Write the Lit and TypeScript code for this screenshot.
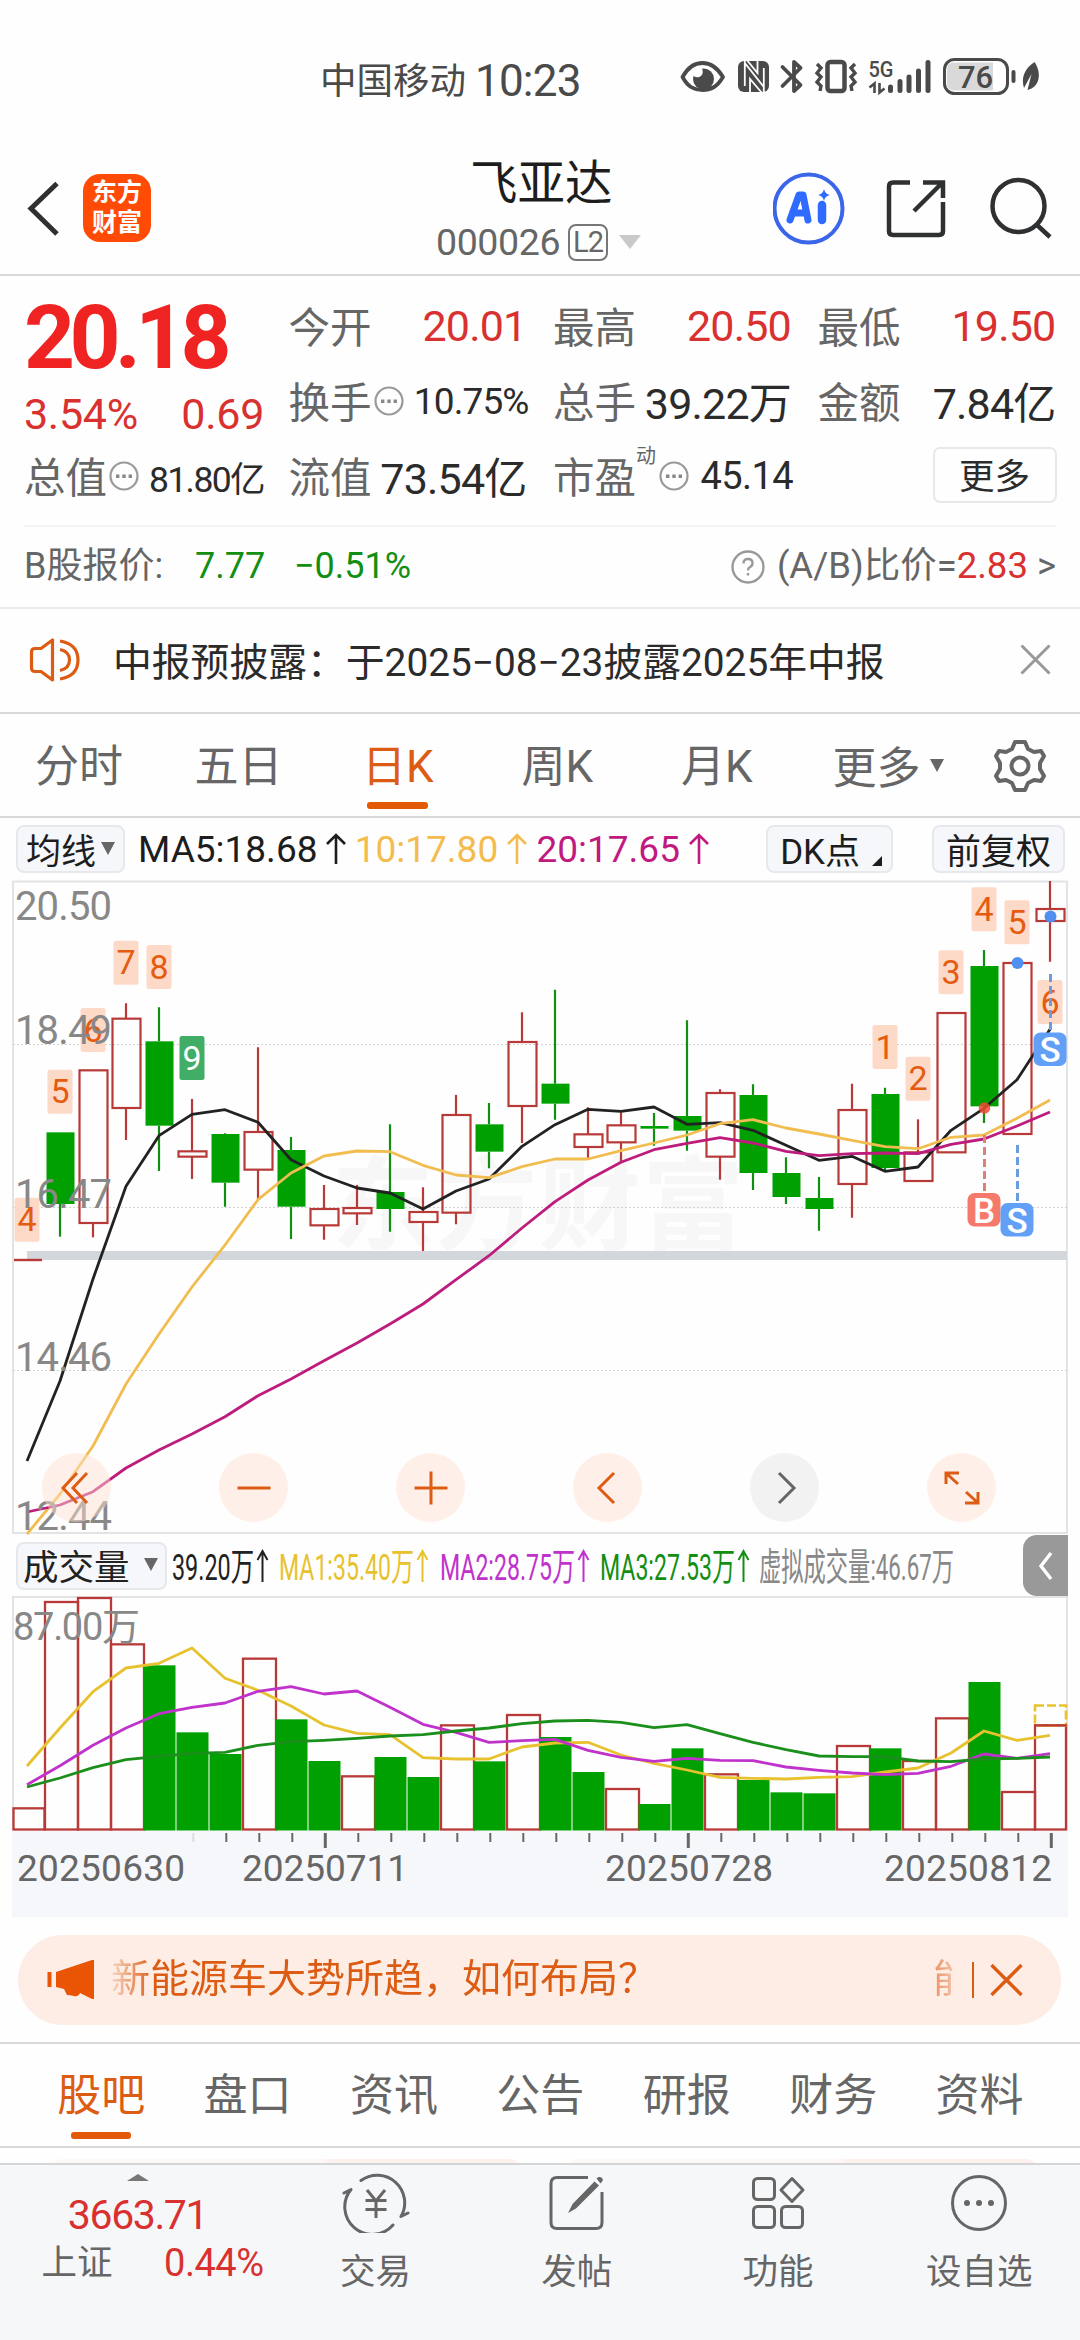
import { LitElement, html, svg, css } from "lit";
import { customElement, property } from "lit/decorators.js";
import { classMap } from "lit/directives/class-map.js";

const RED = "#b83a38";
const GREEN = "#00a000";
const PITCH = 33;
const cx = (i: number) => 27 + PITCH * i;

/* Vertical values are stored in thirds of a pixel. */
const ky = (v: number) => 870 + v / 3;
const vy = (v: number) => 1580 + v / 3;

/* [up, high, bodyTop, bodyBottom, low] */
const CANDLES: [number, number, number, number, number][] = [
  [1, 1171, 1171, 1174, 1174], [0, 790, 790, 1005, 1103], [1, 604, 604, 1062, 1105], [1, 403, 449, 717, 813],
  [0, 415, 517, 770, 906], [1, 690, 847, 863, 930], [0, 793, 795, 941, 1013], [1, 535, 789, 902, 992],
  [0, 804, 843, 1013, 1110], [1, 948, 1020, 1069, 1112], [1, 948, 1017, 1033, 1068], [0, 766, 969, 1020, 1088],
  [1, 955, 1029, 1059, 1146], [1, 678, 738, 1031, 1066], [0, 702, 766, 848, 898], [1, 430, 519, 711, 822],
  [0, 362, 644, 704, 752], [1, 715, 796, 834, 868], [1, 730, 769, 820, 880], [0, 732, 771, 779, 830],
  [0, 454, 741, 785, 845], [1, 661, 672, 863, 932], [0, 646, 678, 912, 963], [0, 865, 912, 984, 1005],
  [0, 924, 987, 1020, 1085], [1, 644, 723, 945, 1046], [0, 656, 675, 897, 903], [1, 751, 850, 936, 936],
  [1, 432, 432, 850, 850], [0, 243, 291, 712, 762], [1, 282, 282, 795, 795], [1, 36, 120, 156, 278],
];
const MA5 = [1776, 1536, 1230, 952, 800, 736, 722, 760, 872, 921, 957, 972, 1020, 966, 930, 832, 767, 721, 727, 714, 766, 761, 784, 829, 874, 862, 907, 894, 784, 718, 632, 481];
const MA10 = [1995, 1875, 1731, 1545, 1395, 1254, 1128, 992, 912, 861, 846, 848, 889, 918, 926, 893, 870, 870, 845, 822, 798, 764, 752, 777, 795, 814, 833, 839, 805, 798, 748, 693];
const MA20 = [1929, 1908, 1868, 1797, 1743, 1695, 1643, 1580, 1530, 1475, 1422, 1365, 1305, 1232, 1160, 1077, 998, 933, 880, 842, 823, 806, 822, 847, 860, 854, 852, 854, 826, 810, 771, 729];

/* [candle index, top, digit] */
const COUNTS: [number, number, string][] = [
  [0, 986, "4"], [1, 602, "5"], [2, 417, "6"], [3, 215, "7"], [4, 228, "8"], [5, 501, "9"],
  [26, 468, "1"], [27, 563, "2"], [28, 244, "3"], [29, 55, "4"], [30, 94, "5"], [31, 333, "6"],
];

/* [up, top] */
const VOLUMES: [number, number][] = [
  [1, 688], [1, 69], [1, 57], [1, 196], [0, 259], [0, 460], [0, 525], [1, 239], [0, 421], [0, 546], [1, 592],
  [0, 534], [0, 594], [1, 439], [0, 547], [1, 408], [0, 474], [0, 579], [1, 630], [0, 675], [0, 508], [1, 586],
  [0, 603], [0, 640], [0, 643], [1, 501], [0, 508], [1, 546], [1, 418], [0, 309], [1, 639], [1, 439],
];
const V1 = [561, 447, 338, 267, 253, 207, 298, 334, 381, 438, 463, 467, 536, 540, 540, 504, 492, 490, 528, 553, 573, 595, 598, 600, 595, 593, 579, 567, 522, 456, 484, 469];
const V2 = [617, 560, 499, 447, 404, 385, 372, 337, 323, 345, 336, 385, 436, 460, 490, 485, 481, 514, 535, 547, 538, 544, 545, 564, 574, 582, 587, 583, 562, 525, 538, 524];
const V3 = [624, 597, 566, 542, 532, 523, 520, 499, 488, 484, 478, 471, 467, 456, 447, 434, 426, 424, 430, 446, 437, 464, 490, 512, 531, 533, 533, 546, 548, 540, 538, 534];

const points = (values: number[], y: (v: number) => number) =>
  values.map((v, i) => `${cx(i)},${y(v).toFixed(1)}`).join(" ");

const FONT = css`Roboto, "Noto Sans CJK SC", sans-serif`;

const base = css`
  :host { display: block; font-family: ${FONT}; }
  * { box-sizing: border-box; }
  svg { display: block; flex: none; }
  svg text { font-family: ${FONT}; }
`;

@customElement("status-bar")
class StatusBar extends LitElement {
  static styles = [base, css`
    .bar { display: flex; height: 110px; padding: 52px 0 0 320px; color: #4a4a4a; }
    .carrier { width: 155px; font-size: 36.500px; line-height: 60px; white-space: nowrap; }
    .time { width: 205px; font-size: 44px; line-height: 59px; letter-spacing: -0.8px; }
  `];
  render() {
    return html`<div class="bar">
      <span class="carrier">中国移动</span><span class="time">10:23</span>
      <svg width="364" height="50" viewBox="680 56 364 50" fill="none" stroke="#4a4a4a">
        <path d="M682.500 81C688 71 694 67 702.500 67S717 71 723 81C717 91 711 94 702.500 94S688 91 682.500 81Z" stroke-width="3.800" stroke-linejoin="round"/>
        <circle cx="703.500" cy="83" r="10.500" fill="#4a4a4a" stroke="none"/>
        <path d="M690 76L701 71c3 4 2 9-2 10-3 1-7-1-9-5z" fill="#fff" stroke="none"/>
        <rect x="738" y="65" width="31" height="31" rx="6" fill="#4a4a4a" stroke="none"/>
        <path d="M744.800 65V90M763.800 72V96M744.800 67L763.800 91M750 97V83L762 97M757.500 65V77L746 63" stroke="#fff" stroke-width="1.800"/>
        <path d="M782.500 71L800.500 89 794 95V66L800.500 72 782.500 90" stroke-width="3.800" stroke-linejoin="round" stroke-linecap="round"/>
        <rect x="827.500" y="66" width="17" height="29" rx="3" stroke-width="4.500"/>
        <path d="M817 68l4 4-4 5 4 4-4 5 4 4-1 5M855 68l-4 4 4 5-4 4 4 5-4 4 1 5" stroke-width="3.400"/>
        <text x="868.500" y="80.500" font-size="22.500" font-weight="500" textLength="25" lengthAdjust="spacingAndGlyphs" fill="#4a4a4a" stroke="none">5G</text>
        <path d="M874.500 97V87.500l-5 4M879.500 87v9.500l5-4" stroke-width="2.600"/>
        <path d="M890.500 94.500V91M900 94.500V85.500M909 94.500V81M918.500 94.500V75M928 94.500V66.500" stroke-width="5" stroke-linecap="round"/>
        <rect x="944.500" y="63.500" width="63" height="34" rx="10" fill="#fff" stroke-width="3"/>
        <path d="M954 66.500h39v28h-39q-7 0-7-7v-14q0-7 7-7Z" fill="#d9d9d9" stroke="none"/>
        <text x="975.500" y="91.500" font-size="31" font-weight="500" text-anchor="middle" fill="#4a4a4a" stroke="none">76</text>
        <path d="M1013.500 76v9" stroke-width="4" stroke-linecap="round"/>
        <path d="M1034.500 66C1024 73 1021 82 1024 92L1031.500 78 1027.500 94C1040 91 1042 77 1034.500 66Z" fill="#4a4a4a" stroke="none"/>
      </svg>
    </div>`;
  }
}

@customElement("stock-header")
class StockHeader extends LitElement {
  static styles = [base, css`
    .header { display: grid; grid-template-columns: 83px 68px 1fr 307px; height: 166px; border-bottom: 2px solid #d9d9d9; }
    .back { margin: 70px 0 0 26px; }
    .logo { display: flex; flex-direction: column; align-items: center; width: 68px; height: 68px; margin-top: 64px; padding-top: 4px;
      border-radius: 17px; background: #ff4b05; color: #fff; font-weight: 700; font-size: 25px; line-height: 30px; }
    .title { display: flex; flex-direction: column; padding-left: 285px; white-space: nowrap; }
    .name { margin: 46px 0 0 34px; font-size: 47.500px; line-height: 56px; color: #1d1d1d; font-weight: 400; }
    .code { display: flex; align-items: center; height: 44px; margin-top: 8px; font-size: 37.500px; color: #666; letter-spacing: -0.4px; }
    .level { width: 40px; height: 37px; margin: 0 11px 0 8px; border: 2px solid #777; border-radius: 8px; font-size: 29px; line-height: 33px; text-align: center; letter-spacing: -1px; }
    .tri { width: 0; border: 11px solid transparent; border-top: 14px solid #c9c9c9; border-bottom: 0; }
  `];
  render() {
    return html`<div class="header">
      <svg class="back" width="34" height="58" viewBox="26 180 34 58"><path d="M57 183.500L31 208.500 57 234" fill="none" stroke="#2e3032" stroke-width="5"/></svg>
      <div class="logo"><span>东方</span><span>财富</span></div>
      <div class="title">
        <div class="name">飞亚达</div>
        <div class="code"><span>000026</span><span class="level">L2</span><i class="tri"></i></div>
      </div>
      <svg width="307" height="164" viewBox="773 110 307 164" fill="none" stroke="#2e3032" stroke-width="4.500">
        <circle cx="808.500" cy="208.500" r="34" stroke="#3b66ea" stroke-width="4" fill="#fff"/>
        <path d="M790 220L799 195H803L808 220M794 213H806" stroke="#2f6bff" stroke-width="7" stroke-linejoin="round" stroke-linecap="round"/>
        <path d="M822 205V220" stroke="#2f6bff" stroke-width="8.500" stroke-linecap="round"/>
        <path d="M824 189q1 5 6 6-5 1-6 6-1-5-6-6 5-1 6-6Z" fill="#2f6bff" stroke="none"/>
        <path d="M910 182.500H893q-4 0-4 4V231q0 4 4 4h46q4 0 4-4V202M914 211L942 183M923 182.500h20V198"/>
        <circle cx="1018.500" cy="206" r="26"/><path d="M1037 225L1050 237"/>
      </svg>
    </div>`;
  }
}

const dots = html`<svg width="30" height="30" viewBox="0 0 30 30"><circle cx="15" cy="15" r="13.500" fill="none" stroke="#999" stroke-width="2.200"/><path d="M7 13.500h3.400v3.400H7zM13.300 13.500h3.400v3.400h-3.400zM19.600 13.500h3.400v3.400h-3.400z" fill="#888"/></svg>`;

@customElement("quote-panel")
class QuotePanel extends LitElement {
  static styles = [base, css`
    .grid { display: grid; grid-template-columns: 238px 238px 238px 238px; grid-template-rows: 75px 75px 75px; column-gap: 26.5px;
      height: 251px; margin: 0 24px; padding-top: 13px; border-bottom: 2px solid #f3f3f3; white-space: nowrap; }
    .main { grid-row: span 2; display: flex; flex-direction: column; color: #d93030; }
    .price { height: 88px; margin-top: 5px; font-size: 89px; line-height: 88px; font-weight: 700; letter-spacing: -5.600px; color: #f02323; }
    .change { display: flex; justify-content: space-between; height: 56px; margin: 4px -2px 0 0; line-height: 56px; font-size: 43px; letter-spacing: -0.3px; }
    .cell { display: flex; align-items: center; justify-content: space-between; height: 71px; font-size: 43px; letter-spacing: -0.8px; color: #2b2b2b; }
    .label { display: flex; align-items: center; font-size: 41.500px; letter-spacing: 0; color: #666; }
    .label svg { margin: 3px 0 0 2px; }
    .small { padding-top: 3px; margin-right: -2px; font-size: 37px; letter-spacing: -0.9px; }
    .tight { font-size: 35.500px; letter-spacing: -1.600px; }
    .wide { font-size: 38px; letter-spacing: -0.6px; }
    .up { padding-top: 2px; color: #d93030; }
    .label sup { width: 21px; margin-bottom: 38px; font-size: 20px; line-height: 20px; }
    .more { display: flex; align-items: center; justify-content: center; justify-self: end; width: 124px; height: 56px; margin: 8px -1px 0 0; padding-bottom: 4px;
      border: 2px solid #e6e8ea; border-radius: 7px; font-size: 35.500px; color: #2b2b2b; }
    .b { display: flex; align-items: center; height: 82px; padding: 0 24px; border-bottom: 2px solid #ebebeb; font-size: 36px; line-height: 50px; color: #666; white-space: nowrap; padding-bottom: 2px; }
    .blabel { width: 171px; } .bprice { width: 99px; } .down { color: #128f12; letter-spacing: 0; }
    .ratio { display: flex; align-items: center; margin-left: auto; letter-spacing: 0; font-size: 36.500px; }
    .ratio .up { padding: 0; }
    .ratio svg { margin: 2px 12px 0 0; }
    .gt { margin-left: 9px; }
  `];
  render() {
    return html`<div class="grid">
      <div class="main"><div class="price">20.18</div><div class="change"><span>3.54%</span><span>0.69</span></div></div>
      <div class="cell"><span class="label">今开</span><span class="up">20.01</span></div>
      <div class="cell"><span class="label">最高</span><span class="up">20.50</span></div>
      <div class="cell"><span class="label">最低</span><span class="up">19.50</span></div>
      <div class="cell"><span class="label">换手${dots}</span><span class="small">10.75%</span></div>
      <div class="cell"><span class="label">总手</span><span>39.22万</span></div>
      <div class="cell"><span class="label">金额</span><span>7.84亿</span></div>
      <div class="cell"><span class="label">总值${dots}</span><span class="small tight">81.80亿</span></div>
      <div class="cell"><span class="label">流值</span><span>73.54亿</span></div>
      <div class="cell"><span class="label">市盈<sup>动</sup>${dots}</span><span class="small wide">45.14</span></div>
      <div class="more">更多</div>
    </div>
    <div class="b"><span class="blabel">B股报价:</span><span class="down bprice">7.77</span><span class="down">−0.51%</span>
      <span class="ratio"><svg width="34" height="34" viewBox="0 0 34 34" fill="none" stroke="#999" stroke-width="2.400"><circle cx="17" cy="17" r="15.500"/><path d="M12.500 13.500Q12.500 9 17 9t4.500 4.200q0 2.600-2.500 3.800-2 1-2 3.500M17 23v2.600"/></svg>(A/B)比价=<span class="up">2.83</span><span class="gt">&gt;</span></span>
    </div>`;
  }
}

@customElement("notice-row")
class NoticeRow extends LitElement {
  static styles = [base, css`
    .row { display: flex; align-items: center; height: 105px; padding: 0 29px 2px 29px; border-bottom: 2px solid #d9d9d9; }
    .text { flex: 1; margin: -2px 0 0 32px; font-size: 38.800px; white-space: nowrap; color: #2b2b2b; }
  `];
  render() {
    return html`<div class="row">
      <svg width="52" height="46" viewBox="29 639 52 46" fill="none" stroke="#dc5c14" stroke-width="3.200" stroke-linejoin="round">
        <path d="M52.500 642V682L41 673.500H35q-3.500 0-3.500-3.500V654q0-3.500 3.500-3.500h6ZM60 643q18 3 18 19T60 681M60 651.500q9.500 2 9.500 10.500T60 672.500"/></svg>
      <span class="text">中报预披露：于2025−08−23披露2025年中报</span>
      <svg width="31" height="31" viewBox="0 0 31 31"><path d="M1.500 1.500l28 28M29.500 1.500l-28 28" stroke="#999" stroke-width="3"/></svg>
    </div>`;
  }
}

@customElement("period-tabs")
class PeriodTabs extends LitElement {
  static styles = [base, css`
    .tabs { display: flex; height: 104px; padding-left: 35px; border-bottom: 2px solid #d9d9d9; font-size: 44px; color: #666; white-space: nowrap; }
    .tab { display: flex; flex-direction: column; width: 159.500px; line-height: 106px; }
    .tab.on { color: #dc5c14; }
    .tab i { width: 61px; height: 7px; margin: -18px 0 0 13px; border-radius: 3px; background: #e25a08; }
    .k { padding-left: 8px; } .k i { margin-left: 5px; }
    .more { display: flex; align-items: center; width: 160px; }
    .tri { border: 7.500px solid transparent; border-top: 13px solid #666; border-bottom: 0; margin-left: 9px; }
    .gear { margin-top: 25px; }
  `];
  render() {
    const tabs = ["分时", "五日", "日K", "周K", "月K"];
    return html`<div class="tabs">
      ${tabs.map((t) => html`<div class=${classMap({ tab: true, on: t === "日K", k: t.endsWith("K") })}><span>${t}</span>${t === "日K" ? html`<i></i>` : ""}</div>`)}
      <div class="more">更多<i class="tri"></i></div>
      <svg class="gear" width="54" height="54" viewBox="-27 -27 54 54" fill="none" stroke="#666" stroke-width="4" stroke-linejoin="round">
        <path d="M-5-24H5L8-17 14-14 21-15 24-10 20-3V3L24 10 21 15 14 14 8 17 5 24H-5L-8 17-14 14-21 15-24 10-20 3V-3L-24-10-21-15-14-14-8-17Z"/><circle r="8.500"/></svg>
    </div>`;
  }
}

@customElement("ma-legend")
class MaLegend extends LitElement {
  static styles = [base, css`
    .row { display: flex; align-items: center; height: 58px; padding: 4px 15px 0 16px; font-size: 37px; white-space: nowrap; color: #1d1d1d; }
    .btn { display: flex; align-items: center; height: 48px; padding: 0 8px 2px; border: 2px solid #e6e8ec; border-radius: 8px; background: #f6f7fa; font-size: 35px; }
    .tri { margin-left: 5px; border: 7px solid transparent; border-top: 13px solid #666; border-bottom: 0; }
    .item { display: flex; align-items: center; gap: 9px; }
    .ma5 { width: 217px; margin-left: 13px; }
    .ma10 { width: 182px; color: #f4bc4e; }
    .ma20 { width: 230px; color: #c01a80; }
    .dk { width: 127px; margin-right: 39px; padding-left: 12px; }
    .reset { padding: 0 12px 2px; }
    .corner { align-self: flex-end; margin: 0 0 3px 12px; border: 5.500px solid #1d1d1d; border-top-color: transparent; border-left-color: transparent; }
  `];
  arrow() {
    return html`<svg width="20" height="32" viewBox="0 0 20 32"><path d="M10 31V2M1 11L10 2l9 9" fill="none" stroke="currentColor" stroke-width="2.600"/></svg>`;
  }
  render() {
    return html`<div class="row">
      <div class="btn"><span>均线</span><i class="tri"></i></div>
      <span class="item ma5">MA5:18.68${this.arrow()}</span>
      <span class="item ma10">10:17.80${this.arrow()}</span>
      <span class="item ma20">20:17.65${this.arrow()}</span>
      <div class="btn dk"><span>DK点</span><i class="corner"></i></div>
      <div class="btn reset">前复权</div>
    </div>`;
  }
}

@customElement("candle-chart")
class CandleChart extends LitElement {
  static styles = [base, css`
    .chart { position: relative; height: 659px; }
    .grid { stroke: #d2d2d2; stroke-width: 1.200; stroke-dasharray: 2 2; }
    .axis { font-size: 40px; fill: #888; }
    .controls { position: absolute; left: 42px; right: 84px; bottom: 13px; display: flex; justify-content: space-between; }
    .ctl { display: grid; place-items: center; width: 69px; height: 69px; border-radius: 50%; background: rgba(255, 226, 210, 0.48); color: #dc5c14; }
    .ctl.off { background: #f2f2f2; color: #666; }
  `];
  candle(c: [number, number, number, number, number], i: number) {
    const [up, hi, top, bot, lo] = c;
    const x = cx(i);
    const color = up ? RED : "#128f12";
    if (i === 0) return svg`<path d="M14 1261h28" stroke=${RED} stroke-width="2.400"/>`;
    return svg`<path d=${`M${x} ${ky(hi)}V${ky(top)}M${x} ${ky(bot)}V${ky(lo)}`} stroke=${color} stroke-width="2.200"/>
      ${up
        ? svg`<rect x=${x - 13.5} y=${ky(top)} width="28" height=${(bot - top) / 3} fill="none" stroke=${RED} stroke-width="2.200"/>`
        : svg`<rect x=${x - 13.5} y=${ky(top)} width="28" height=${(bot - top) / 3} fill=${GREEN}/>`}`;
  }
  signal(x: number, y: number, letter: string, color: string) {
    return svg`<rect x=${x - 16.5} y=${y} width="33" height="33.500" rx="7" fill=${color}/>
      <text x=${x} y=${y + 29.5} font-size="35" font-weight="500" text-anchor="middle" fill="#fff">${letter}</text>`;
  }
  render() {
    const paths = [
      "M0-15L-14 0 0 15M10-15L-4 0 10 15", "M-16.500 0h33", "M-16.500 0h33M0-16.500v33", "M6-15L-9 0 6 15", "M-6-15L9 0-6 15",
      "M-16-4V-15H-3M-15-14L-4-4M16 4V15H3M15 14L4 4",
    ];
    return html`<div class="chart">
      <svg width="1080" height="659" viewBox="0 877 1080 659">
        <text x="332" y="1243" font-size="102" font-weight="700" textLength="412" fill="#f7f7f7">东方财富</text>
        <path d="M13 882.500H1067V1534H13Z" fill="none" stroke="#e2e3e5" stroke-width="2"/>
        <path class="grid" d="M13 1045.500H1067M13 1208.500H1067M13 1371.500H1067"/>
        <rect x="27" y="1252" width="1040" height="9" fill="#d3d6db"/>
        ${COUNTS.map(([i, top, d]) => svg`<rect x=${cx(i) - 12.5} y=${ky(top)} width="25" height="44" rx="2.500" fill=${d === "9" ? "#41ad66" : "#fdd9c8"}/>
          <text x=${cx(i)} y=${ky(top) + 33.5} font-size="34" text-anchor="middle" fill=${d === "9" ? "#fff" : "#e55b10"}>${d}</text>`)}
        ${CANDLES.map((c, i) => this.candle(c, i))}
        <g fill="none" stroke-width="2.800" stroke-linejoin="round">
          <polyline points=${points(MA5, ky)} stroke="#222"/>
          <polyline points=${points(MA10, ky)} stroke="#f2bd50"/>
          <polyline points=${points(MA20, ky)} stroke="#bd1c7c"/>
        </g>
        <text class="axis" x="15" y="920.500" textLength="97">20.50</text>
        <text class="axis" x="15" y="1044.500" textLength="97">18.49</text>
        <text class="axis" x="15" y="1208.500" textLength="97">16.47</text>
        <text class="axis" x="15" y="1372" textLength="97">14.46</text>
        <text class="axis" x="15" y="1531" textLength="97">12.44</text>
        <g fill="none" stroke-width="3" stroke-dasharray="8 4">
          <path d="M1050.500 975V1031M1017.500 1146V1202" stroke="#6a9cde"/><path d="M984.500 1136V1192" stroke="#dd8075"/>
        </g>
        <circle cx="1050.500" cy="917.500" r="6" fill="#4f8ff0"/><circle cx="1017.500" cy="964" r="6" fill="#4f8ff0"/>
        <circle cx="984.500" cy="1109" r="5.800" fill="#ee4a32" fill-opacity=".85"/>
        ${this.signal(1050, 1033.5, "S", "#62a0f7")}${this.signal(984, 1194, "B", "#f67a6b")}${this.signal(1017, 1204, "S", "#62a0f7")}
      </svg>
      <div class="controls">${paths.map((d, i) => html`<div class=${classMap({ ctl: true, off: i === 4 })}>
        <svg width="40" height="40" viewBox="-20 -20 40 40" fill="none" stroke="currentColor" stroke-width="3"><path d=${d}/></svg></div>`)}</div>
    </div>`;
  }
}

@customElement("volume-chart")
class VolumeChart extends LitElement {
  static styles = [base, css`
    .legend { display: flex; align-items: center; height: 61px; padding-left: 16px; color: #222; font-size: 36px; }
    .btn { display: flex; align-items: center; justify-content: space-between; flex: none; width: 151px; height: 48px; margin-right: 4px; padding: 0 7px 3px 5px; border: 2px solid #e6e8ec; border-radius: 8px; background: #f6f7fa; font-size: 35.500px; }
    .tri { border: 7px solid transparent; border-top: 13px solid #666; border-bottom: 0; }
    .tab { display: grid; place-items: center; width: 45px; height: 61px; margin-left: 67px; border-radius: 14px 0 0 14px; background: #999; }
    .date { font-size: 37px; fill: #666; }
    .frame { stroke: #e2e3e5; stroke-width: 2; fill: none; }
  `];
  item(x: number, w: number, label: string, color: string, arrow = true) {
    const tw = arrow ? w - 14 : w;
    const ax = x + w - 5.5;
    return svg`<text x=${x} y="1580" font-size="37.500" textLength=${tw} lengthAdjust="spacingAndGlyphs" fill=${color}>${label}</text>
      ${arrow ? svg`<path d=${`M${ax} 1582V1551M${ax - 5} 1560L${ax} 1551l5 9`} fill="none" stroke=${color} stroke-width="2"/>` : ""}`;
  }
  bar([up, top]: [number, number], i: number) {
    const x = cx(i) - 16;
    const y = vy(top);
    return up
      ? svg`<rect x=${i === 0 ? 13.5 : x + 1} y=${y} width=${i === 0 || i === 31 ? 31 : 33} height=${1830.5 - y} fill="none" stroke=${RED} stroke-width="2.300"/>`
      : svg`<rect x=${x + 0.5} y=${y} width="32" height=${1831.5 - y} fill=${GREEN}/>`;
  }
  render() {
    const ticks = Array.from({ length: 27 }, (_, k) => k + 5);
    return html`<div class="legend">
      <div class="btn"><span>成交量</span><i class="tri"></i></div>
      <svg width="785" height="56" viewBox="171 1538 785 56">
        ${this.item(172, 96, "39.20万", "#222")}${this.item(279, 149, "MA1:35.40万", "#e8c22e")}
        ${this.item(440, 149, "MA2:28.75万", "#c032cc")}${this.item(600, 149, "MA3:27.53万", "#128f12")}
        ${this.item(759, 195, "虚拟成交量:46.67万", "#888", false)}
      </svg>
      <div class="tab"><svg width="16" height="30" viewBox="0 0 16 30"><path d="M13 2L3 15l10 13" fill="none" stroke="#fff" stroke-width="3.400"/></svg></div>
    </div>
    <svg width="1080" height="322" viewBox="0 1597 1080 322">
      <rect x="12" y="1832" width="1056" height="86" fill="#f6f7fa"/>
      <path class="frame" d="M13 1831V1598H1067V1831"/>
      ${VOLUMES.map((v, i) => this.bar(v, i))}
      <rect x="1035" y="1706.500" width="31" height="20" fill="none" stroke="#e8c22e" stroke-width="2.600" stroke-dasharray="9 3"/>
      <path d="M1034 1726.300h33" stroke=${RED} stroke-width="2.300"/>
      <g fill="none" stroke-width="2.800" stroke-linejoin="round">
        <polyline points=${points(V1, vy)} stroke="#e8c22e"/><polyline points=${points(V2, vy)} stroke="#c032cc"/><polyline points=${points(V3, vy)} stroke="#1b8f1b"/>
      </g>
      <text x="13" y="1641" font-size="38" textLength="127" fill="#888">87.00万</text>
      ${ticks.map((i) => {
        const big = i === 9 || i === 20 || i === 31;
        return svg`<path d=${`M${cx(i) + 1.3} 1834v${big ? 15 : 9}`} stroke=${i === 5 ? "#ddd" : "#666"} stroke-width=${big ? 3 : 2}/>`;
      })}
      <text class="date" x="17" y="1881.500" textLength="168">20250630</text>
      <text class="date" x="242" y="1881.500" textLength="166">20250711</text>
      <text class="date" x="605" y="1881.500" textLength="168">20250728</text>
      <text class="date" x="884" y="1881.500" textLength="168">20250812</text>
    </svg>`;
  }
}

@customElement("promo-banner")
class PromoBanner extends LitElement {
  static styles = [base, css`
    .wrap { height: 126px; padding: 17px 19px 0 18px; border-bottom: 2px solid #d9d9d9; }
    .pill { display: flex; align-items: center; height: 90px; padding: 0 38px 0 29px; border-radius: 45px; background: #fdede4; color: #dc5c14; }
    .ticker { display: flex; justify-content: space-between; width: 845px; margin: -2px 0 0 16px; overflow: hidden; font-size: 39px; line-height: 56px; white-space: nowrap;
      mask-image: linear-gradient(90deg, rgba(0,0,0,.15), #000 42px, #000 800px, rgba(0,0,0,.3)); }
    .next { width: 20px; overflow: hidden; }
    .sep { width: 2px; height: 36px; margin: 0 16px 0 19px; background: #dc5c14; }
  `];
  render() {
    return html`<div class="wrap"><div class="pill">
      <svg width="48" height="42" viewBox="47 1960 48 42" fill="#e95504"><path d="M47.500 1973h4v15h-4zM56 1973L92 1961h2v39h-2L80 1994q-2 4-6 3t-7-1l-3-6-8-2Z"/></svg>
      <div class="ticker"><span>新能源车大势所趋，如何布局？</span><span class="next">能</span></div>
      <i class="sep"></i>
      <svg width="33" height="32" viewBox="0 0 33 32"><path d="M1.500 1l30 30M31.500 1l-30 30" stroke="#dc5c14" stroke-width="3.400"/></svg>
    </div></div>`;
  }
}

@customElement("section-tabs")
class SectionTabs extends LitElement {
  static styles = [base, css`
    .tabs { display: flex; height: 104px; padding-left: 28px; border-bottom: 2px solid #d9d9d9; font-size: 44px; color: #666; }
    .tab { display: flex; flex-direction: column; align-items: center; width: 146.400px; line-height: 104px; }
    .on { color: #dc5c14; }
    .on i { width: 60px; height: 7px; margin-top: -16px; border-radius: 3px; background: #e25a08; }
    .cards { display: flex; gap: 42px; height: 15px; padding: 11px 0 0 48px; overflow: hidden; }
    .card { width: 475px; height: 30px; border-radius: 15px; background: linear-gradient(90deg, #fef8f6 0 58%, #fdf1ed 59%); }
  `];
  render() {
    return html`<div class="tabs">${["股吧", "盘口", "资讯", "公告", "研报", "财务", "资料"].map((t, i) =>
      html`<div class=${classMap({ tab: true, on: i === 0 })}><span>${t}</span>${i === 0 ? html`<i></i>` : ""}</div>`)}</div>
      <div class="cards"><div class="card"></div><div class="card"></div></div>`;
  }
}

@customElement("bottom-nav")
class BottomNav extends LitElement {
  static styles = [base, css`
    .nav { display: flex; height: 177px; border-top: 2px solid #d4d5d7; background: #f6f7f9; color: #666; }
    .index { display: flex; flex-direction: column; align-items: center; width: 275px; }
    .tri { margin-top: 9px; border: 11px solid transparent; border-bottom: 7px solid #777; border-top: 0; }
    .value { height: 50px; margin-top: 9px; line-height: 50px; font-size: 41px; letter-spacing: -1.400px; color: #d93030; }
    .line { display: flex; justify-content: space-between; width: 222px; margin-left: 30px; font-size: 35.500px; line-height: 47px; }
    .pct { color: #d93030; font-size: 38px; letter-spacing: -0.5px; }
    .item { display: flex; flex-direction: column; align-items: center; width: 201.200px; padding-top: 8px; font-size: 35.500px; line-height: 50px; }
    .item svg { margin-bottom: 14px; }
  `];
  @property({ attribute: false }) items = [
    { label: "交易", icon: svg`<path d="M-15-22.500A27.500 27.500 0 0 1 25 13.500L32 10M-32-10L-25-13.500A27.500 27.500 0 0 0 17 22" stroke-linecap="round" stroke-linejoin="round"/><path d="M-9-13L0-2 9-13M0-3V15M-10.500-2.500H10.500M-10.500 6.500H10.500"/>` },
    { label: "发帖", icon: svg`<path d="M11-25.500H-20q-6 0-6 6V19.500q0 6 6 6H19q6 0 6-6V-11"/><path d="M19.500-24.500l2-1.500q2-.5 3.500 1t.5 3l-2 2.500ZM17.500-21.500l4.500 4L-1 5.500-9 10-4.500 1Z" fill="#666" stroke="none"/>` },
    { label: "功能", icon: svg`<rect x="-24.500" y="-24.500" width="21" height="21" rx="4"/><rect x="-24.500" y="3.500" width="21" height="21" rx="4"/><rect x="3.500" y="3.500" width="21" height="21" rx="4"/><path d="M14-24.500L25-13 14-1.500 3-13Z" stroke-linejoin="round"/>` },
    { label: "设自选", icon: svg`<circle r="26.500"/><g fill="#666" stroke="none"><circle cx="-12" r="3"/><circle r="3"/><circle cx="12" r="3"/></g>` },
  ];
  render() {
    return html`<div class="nav">
      <div class="index"><i class="tri"></i><span class="value">3663.71</span><div class="line"><span>上证</span><span class="pct">0.44%</span></div></div>
      ${this.items.map((n) => html`<div class="item"><svg width="68" height="60" viewBox="-34 -30 68 60" fill="none" stroke="#666" stroke-width="3">${n.icon}</svg><span>${n.label}</span></div>`)}
    </div>`;
  }
}

@customElement("app-root")
class AppRoot extends LitElement {
  static styles = css`
    :host { display: block; width: 1080px; height: 2340px; overflow: hidden; background: #fefefe; }
  `;
  render() {
    return html`<status-bar></status-bar><stock-header></stock-header><quote-panel></quote-panel><notice-row></notice-row>
      <period-tabs></period-tabs><ma-legend></ma-legend><candle-chart></candle-chart><volume-chart></volume-chart>
      <promo-banner></promo-banner><section-tabs></section-tabs><bottom-nav></bottom-nav>`;
  }
}
